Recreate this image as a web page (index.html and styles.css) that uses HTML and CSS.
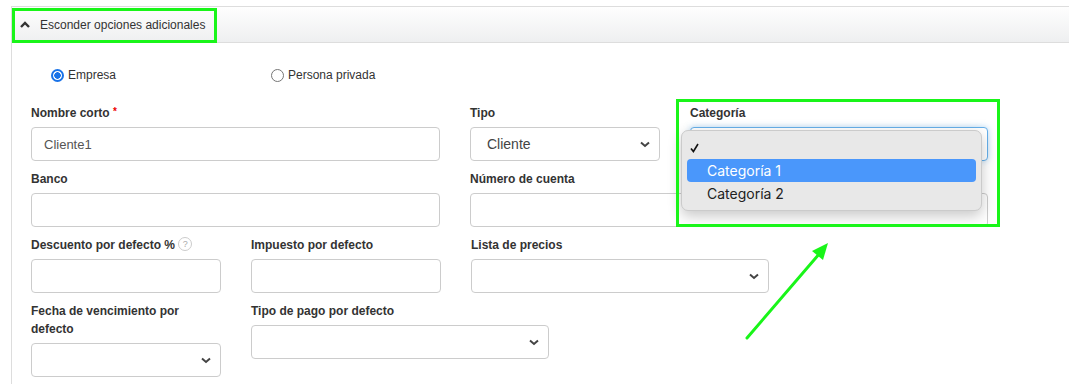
FILE: index.html
```html
<!DOCTYPE html>
<html>
 <head>
  <meta charset="utf-8">
  <link rel="stylesheet" href="styles.css">
 </head>
 <body>
  <div class="panel">
   <div class="panel-heading">
    <svg class="chev-up" width="10" height="7" viewBox="0 0 10 7"><path d="M1 6 L5 2 L9 6" fill="none" stroke="#333" stroke-width="2.4"/></svg>
    Esconder opciones adicionales
   </div>
   <div class="panel-body">
    <div class="radios">
     <label class="radio"><span class="dot checked"></span>Empresa</label>
     <label class="radio"><span class="dot"></span>Persona privada</label>
    </div>

    <div class="row">
     <div class="field w-lg">
      <label class="lbl">Nombre corto <span class="req">*</span></label>
      <input class="ctrl" type="text" value="Cliente1">
     </div>
     <div class="field w-sm">
      <label class="lbl">Tipo</label>
      <div class="select">
       <span>Cliente</span>
       <svg width="10" height="7" viewBox="0 0 10 7"><path d="M1 1.5 L5 5 L9 1.5" fill="none" stroke="#444" stroke-width="2"/></svg>
      </div>
     </div>
     <div class="field w-md cat">
      <label class="lbl">Categoría</label>
      <div class="select focus">
       <span></span>
       <svg width="10" height="7" viewBox="0 0 10 7"><path d="M1 1.5 L5 5 L9 1.5" fill="none" stroke="#444" stroke-width="2"/></svg>
      </div>
      <ul class="popup">
       <li><svg class="check" width="9" height="10" viewBox="0 0 9 10"><path d="M1 5.5 L3.4 8.5 L8 1" fill="none" stroke="#111" stroke-width="1.6"/></svg></li>
       <li class="active">Categoría 1</li>
       <li>Categoría 2</li>
      </ul>
     </div>
    </div>

    <div class="row">
     <div class="field w-lg">
      <label class="lbl">Banco</label>
      <input class="ctrl" type="text">
     </div>
     <div class="field w-xl">
      <label class="lbl">Número de cuenta</label>
      <input class="ctrl" type="text">
     </div>
    </div>

    <div class="row">
     <div class="field w-sm">
      <label class="lbl">Descuento por defecto % <span class="help">?</span></label>
      <input class="ctrl" type="text">
     </div>
     <div class="field w-sm">
      <label class="lbl">Impuesto por defecto</label>
      <input class="ctrl" type="text">
     </div>
     <div class="field w-md">
      <label class="lbl">Lista de precios</label>
      <div class="select">
       <span></span>
       <svg width="10" height="7" viewBox="0 0 10 7"><path d="M1 1.5 L5 5 L9 1.5" fill="none" stroke="#444" stroke-width="2"/></svg>
      </div>
     </div>
    </div>

    <div class="row">
     <div class="field w-sm">
      <label class="lbl">Fecha de vencimiento por defecto</label>
      <div class="select">
       <span></span>
       <svg width="10" height="7" viewBox="0 0 10 7"><path d="M1 1.5 L5 5 L9 1.5" fill="none" stroke="#444" stroke-width="2"/></svg>
      </div>
     </div>
     <div class="field w-md">
      <label class="lbl">Tipo de pago por defecto</label>
      <div class="select">
       <span></span>
       <svg width="10" height="7" viewBox="0 0 10 7"><path d="M1 1.5 L5 5 L9 1.5" fill="none" stroke="#444" stroke-width="2"/></svg>
      </div>
     </div>
    </div>
   </div>
  </div>

  <!-- annotations drawn over the screenshot -->
  <div class="mark mark-head"></div>
  <div class="mark mark-cat"></div>
  <svg class="arrow" width="1069" height="384" viewBox="0 0 1069 384">
   <line x1="747" y1="338" x2="820" y2="253" stroke="#19f519" stroke-width="3" stroke-linecap="round"/>
   <polygon points="828,243 812,251 823,260" fill="#19f519"/>
  </svg>
 </body>
</html>
```

FILE: styles.css
```css
body {
  margin: 0;
  background: #fff;
  font-family: 'Liberation Sans', Arial, sans-serif;
  color: #333;
  overflow: hidden;
  position: relative;
  width: 1069px;
  height: 384px;
}

.panel {
  border: 1px solid #ddd;
  margin: 6px -20px 0 11px;
  height: 420px;
}
.panel-heading {
  height: 35px;
  display: flex;
  align-items: center;
  padding-left: 8px;
  font-size: 12px;
  color: #333;
  background: linear-gradient(#fefefe, #eeeff0);
  border-bottom: 1px solid #ddd;
}
.chev-up {
  margin-right: 10px;
  margin-top: -1px;
}
.panel-body {
  padding-left: 19px;
}

.radios {
  display: flex;
  margin-top: 23px;
  height: 18px;
  align-items: center;
  font-size: 12px;
}
.radio {
  width: 200px;
  padding-left: 20px;
  display: flex;
  align-items: center;
}
.dot {
  width: 11px;
  height: 11px;
  border: 1px solid #767676;
  border-radius: 50%;
  margin-right: 4px;
  box-sizing: content-box;
  background: #fff;
}
.dot.checked {
  width: 9px;
  height: 9px;
  border: 2px solid #1a73e8;
  background: radial-gradient(circle, #1a73e8 0 3px, #fff 3.5px);
}

.row {
  display: flex;
  gap: 30px;
}
.radios + .row {
  margin-top: 11px;
}
.field {
  padding-top: 9px;
  position: relative;
}
.w-sm { width: 190px; }
.w-md { width: 298px; }
.w-lg { width: 409px; }
.w-xl { width: 518px; }

.lbl {
  display: block;
  font-size: 12px;
  font-weight: bold;
  line-height: 18px;
  margin-bottom: 5px;
  color: #333;
}
.req {
  color: #e00;
  font-size: 10px;
  line-height: 0;
  position: relative;
  top: -2px;
}
.help {
  display: inline-block;
  box-sizing: border-box;
  width: 14px;
  height: 14px;
  border: 1px solid #ccc;
  border-radius: 50%;
  font-size: 9px;
  font-weight: normal;
  color: #aaa;
  text-align: center;
  line-height: 12px;
  margin-left: 0;
  vertical-align: top;
  position: relative;
  top: 1px;
}

.ctrl {
  display: block;
  box-sizing: border-box;
  width: 100%;
  height: 34px;
  border: 1px solid #ccc;
  border-radius: 4px;
  padding: 0 12px;
  font-family: 'Liberation Sans', Arial, sans-serif;
  font-size: 13px;
  color: #555;
  background: #fff;
  outline: none;
}
.select {
  box-sizing: border-box;
  height: 34px;
  border: 1px solid #ccc;
  border-radius: 4px;
  padding: 0 9px 0 16px;
  display: flex;
  align-items: center;
  justify-content: space-between;
  font-size: 14px;
  color: #444;
  background: #fff;
}
.select.focus {
  border-color: #66afe9;
  box-shadow: 0 0 6px rgba(102, 175, 233, .5);
}

.popup {
  position: absolute;
  z-index: 5;
  left: -9px;
  top: 35px;
  width: 301px;
  box-sizing: border-box;
  margin: 0;
  padding: 5px 5px;
  list-style: none;
  background: #e8e8e8;
  border: 1px solid #cbcbcb;
  border-radius: 7px;
  box-shadow: 0 5px 14px rgba(0, 0, 0, .22);
  font-family: Inter, 'Noto Sans', sans-serif;
  font-size: 14px;
  color: #222;
}
.popup li {
  height: 23px;
  line-height: 23px;
  padding-left: 20px;
  border-radius: 4px;
  position: relative;
}
.popup li.active {
  background: #4a97fb;
  color: #fff;
}
.check {
  position: absolute;
  left: 3px;
  top: 7px;
}

.mark {
  position: absolute;
  z-index: 10;
  border: 3px solid #19f519;
}
.mark-head {
  left: 12px;
  top: 8px;
  width: 199px;
  height: 29px;
}
.mark-cat {
  left: 676px;
  top: 99px;
  width: 318px;
  height: 122px;
}
.arrow {
  position: absolute;
  z-index: 10;
  left: 0;
  top: 0;
}
```
